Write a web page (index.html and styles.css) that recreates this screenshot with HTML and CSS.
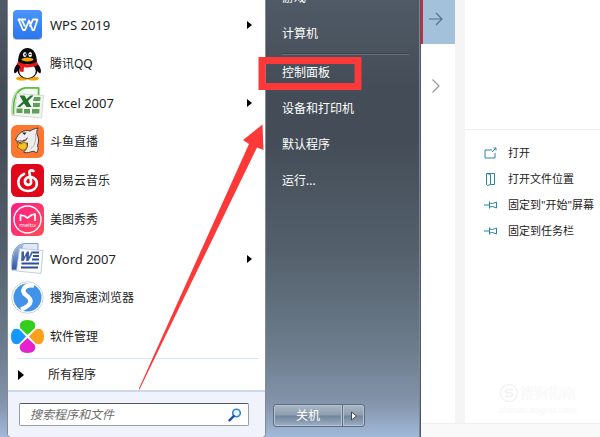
FILE: index.html
```html
<!DOCTYPE html>
<html lang="zh-CN">
<head>
<meta charset="utf-8">
<title>开始菜单</title>
<link rel="stylesheet" href="styles.css">
</head>
<body>
<main class="screen">
  <section class="start">
    <div class="programs">
      <ul class="apps">
        <li><a class="app latin" href="#">
          <svg class="icon" viewBox="0 0 34 34"><defs><linearGradient id="wps" x2="0" y2="1"><stop stop-color="#4b95fb"/><stop offset="1" stop-color="#2a76ee"/></linearGradient></defs><rect x="2" y="3" width="29" height="29" rx="4" fill="#b9bfc8"/><rect x="2" y="2" width="29" height="29" rx="4" fill="url(#wps)"/><path d="M15 11.500H7.500L12 22h2l4-9.500 3.500 9.500h1.500L26.500 11.500H22l-3.500 7M10.500 11.500l3.500 7" fill="none" stroke="#fff" stroke-width="1.800" stroke-linejoin="round"/></svg>
          <span>WPS 2019</span><i class="more"></i></a></li>
        <li><a class="app" href="#">
          <svg class="icon" viewBox="0 0 34 34"><ellipse cx="11" cy="31.500" rx="6" ry="2" fill="#f5a50a"/><ellipse cx="22" cy="31.500" rx="6" ry="2" fill="#f5a50a"/><path d="M7 16c-3 3-5 8-3.500 10 1 1 2-1 3-2 1 5 5 7.500 10 7.500s9-2.500 10-7.500c1 1 2 3 3 2 1.500-2-.5-7-3.500-10C26 6 22 1 16.500 1S7 6 7 16z" fill="#0a0a0c"/><ellipse cx="16.500" cy="24" rx="8.300" ry="7" fill="#fff"/><ellipse cx="13.800" cy="7.500" rx="1.800" ry="2.500" fill="#fff"/><ellipse cx="19.200" cy="7.500" rx="1.800" ry="2.500" fill="#fff"/><circle cx="14.200" cy="7.500" r=".9" fill="#111"/><path d="M18.300 8q1-2 2 0" fill="none" stroke="#111"/><ellipse cx="16.500" cy="12.500" rx="6" ry="1.900" fill="#f8a80d"/><path d="M7 14.500c5 3.500 14 3.500 19 0l1 3.500c-4 2-10 3-14 2.200l-.5 4.800-4-.5.500-5.500-3-1.500z" fill="#e9171c"/></svg>
          <span>腾讯QQ</span></a></li>
        <li><a class="app latin" href="#">
          <svg class="icon" viewBox="0 0 34 34"><path d="M1 29C0 14 2 3 14 1.500h14V29z" fill="#f3faef" stroke="#a9d397"/><path d="M2.500 28C2 12 5 4 14 2h13.500v8" fill="none" stroke="#56b83a" stroke-width="1.600"/><path d="M6 7.500l26.500 2L30.500 32 3 29.500z" fill="#f2f6f1" stroke="#c3ccc3" stroke-width=".7"/><path d="M23 11h6.500l-.3 4H22zM22 17h7l-.3 4H22zM21 23h7.500l-.3 4.500H21zM13 23h6v4.500h-6zM5.500 22.500h6V27h-6z" fill="#5f9f57"/><path d="M8.500 9.500h5l2 3.500 4-3.500h3L17 15l3.500 6h-5L13 17.500 9 21H6l6-5.500z" fill="#24702e"/></svg>
          <span>Excel 2007</span><i class="more"></i></a></li>
        <li><a class="app" href="#">
          <svg class="icon" viewBox="0 0 34 34"><rect width="33" height="33" rx="6" fill="#fc7730"/><path d="M4.500 15C7 8 13 4 19 6c2-1 4-2.500 8-3-1 2-1.500 4-1 6 2 4 2 8 .5 12 1 2 1 4-1 7-2-2-4-2-6-1-3 1-5 1-7 0 3-2 4-5 4-9-4 1-8 0-12-3z" fill="#eeecec" stroke="#473c3c" stroke-width="1"/><path d="M6 15c4 1 8 0 11-3-1 5-6 6-11 3z" fill="#743a31"/><path d="M8 15l1.500-1 1.500 1.500 1.500-2 2 1" fill="none" stroke="#fff" stroke-width=".8"/><path d="M11 7.500l4.500 0-2 2.500z" fill="#32242c"/><path d="M6 17l4 2c3-3 7-1 6 3s-6 4-8 1l-2-1 1.500-2z" fill="#f5c022" stroke="#795417" stroke-width=".8"/><path d="M24.500 9c1 7-1 12-5 15" fill="none" stroke="#b9b5b5"/></svg>
          <span>斗鱼直播</span></a></li>
        <li><a class="app" href="#">
          <svg class="icon" viewBox="0 0 34 34"><rect width="33" height="33" rx="6" fill="#df0719"/><path d="M22.500 7c-2-1.500-4.500-.5-4 2l1.500 8c1 5-5.500 5-6 1-.4-4 3-5 6-5 8.500 1 8 14-3 14C5.500 27 4.500 13.500 13 10" fill="none" stroke="#fff" stroke-width="2.700" stroke-linecap="round"/></svg>
          <span>网易云音乐</span></a></li>
        <li><a class="app" href="#">
          <svg class="icon" viewBox="0 0 34 34"><defs><linearGradient id="mt" x1="0" y1="0" x2="1" y2="1"><stop stop-color="#ff1c8b"/><stop offset="1" stop-color="#ff4c55"/></linearGradient></defs><rect width="33" height="33" rx="6" fill="url(#mt)"/><circle cx="16.500" cy="16.500" r="13.500" fill="none" stroke="#fff" stroke-width="1.400"/><path d="M9.500 18v-6l4 1 3 2 4-3 3.500-1v7" fill="none" stroke="#fff" stroke-width="1.700" stroke-linejoin="round"/><text class="badge-text" x="16.500" y="24" text-anchor="middle">meitu</text></svg>
          <span>美图秀秀</span></a></li>
        <li><a class="app latin" href="#">
          <svg class="icon" viewBox="0 0 34 34"><defs><linearGradient id="wd" y1="1" x2="0" y2="0"><stop stop-color="#2d559f"/><stop offset="1" stop-color="#a9c1ea"/></linearGradient></defs><path d="M1 28C0 12 3 3 13 1.500h14V28z" fill="#dde8f8" stroke="#7f9dd0"/><path d="M1 27.500C1 12 4 3 13 1.500l-2 6-3 20z" fill="url(#wd)"/><path d="M8.500 6.500l23.500 2L30 31.500 5.500 29z" fill="#fafbfe" stroke="#b5c0d4" stroke-width=".8"/><path d="M22 10.500h6M22 14h6M21 17.500h7M10.500 21.500H28M10 25.500h17" stroke="#2e4f94" stroke-width="2"/><path d="M10.500 9.500h2.500v5.500l3-5.500h2v5.500l2.500-5.500h2L17.500 19h-2.300v-5l-2.700 5h-2.300z" fill="#3c5da6"/></svg>
          <span>Word 2007</span><i class="more"></i></a></li>
        <li><a class="app" href="#">
          <svg class="icon" viewBox="0 0 34 34"><circle cx="16.500" cy="16.500" r="15.800" fill="#fff" stroke="#cfd1d5"/><circle cx="16.500" cy="16.500" r="14" fill="#4193ea"/><path d="M23 4.500C13 3 9.500 10 15 14s8 9-5 14.500" fill="none" stroke="#fff" stroke-width="4.500"/></svg>
          <span>搜狗高速浏览器</span></a></li>
        <li><a class="app" href="#">
          <svg class="icon" viewBox="0 0 34 34"><path d="M16.500 15L9.500 8.500C7 3 11 0 16.500 0S26 3 23.500 8.500z" fill="#34cf1d"/><path d="M18 16.500L24.500 9.500C30 7 33 11 33 16.500S30 26 24.500 23.500z" fill="#fba01c"/><path d="M16.500 18L23.500 24.500C26 30 22 33 16.500 33S7 30 9.500 24.500z" fill="#e622cf"/><path d="M15 16.500L8.500 23.500C3 26 0 22 0 16.500S3 7 8.500 9.500z" fill="#1598ff"/></svg>
          <span>软件管理</span></a></li>
      </ul>
      <a class="all" href="#"><i class="more"></i><span>所有程序</span></a>
      <form class="search">
        <label class="field">
          <input type="text" aria-label="搜索程序和文件" placeholder="搜索程序和文件">
          <svg class="lens" viewBox="0 0 14 14"><circle cx="8.500" cy="5" r="3.800" fill="#e5f5ff" stroke="#2b86d0" stroke-width="1.600"/><path d="M5.800 8L1.500 12.300" stroke="#1c4ea4" stroke-width="2.400" stroke-linecap="round"/></svg>
        </label>
      </form>
    </div>
    <div class="system">
      <nav class="links">
        <a href="#">游戏</a>
        <a href="#">计算机</a>
        <hr>
        <a href="#">控制面板</a>
        <a href="#">设备和打印机</a>
        <a href="#">默认程序</a>
        <a href="#">运行...</a>
      </nav>
      <div class="power">
        <button class="off" type="button">关机</button>
        <button class="options" type="button" aria-label="更多选项"><svg viewBox="0 0 8 10"><path d="M1.500 1v8L6.500 5z" fill="#fff" stroke="#3c4651"/></svg></button>
      </div>
    </div>
    <svg class="marks" viewBox="0 0 421 437"><rect x="262" y="60.500" width="96" height="26" fill="none" stroke="#fd3838" stroke-width="7"/><path d="M262.500 124.500L263.500 150 257 147.500 139.500 389.500l-.8-.5L249 144l-6-4z" fill="#fd3838"/></svg>
  </section>
  <section class="results">
    <div class="arrows">
      <a class="go" href="#" aria-label="打开"><svg viewBox="0 0 14 14"><path d="M0 7h13M7 1l6 6-6 6" fill="none" stroke="#53738e" stroke-width="1.200"/></svg></a>
      <a class="next" href="#" aria-label="展开"><svg viewBox="0 0 14 14"><path d="M3.500.5L10 7l-6.500 6.500" fill="none" stroke="#999" stroke-width="1.200"/></svg></a>
    </div>
    <div class="detail">
      <ul class="actions">
        <li><a href="#"><svg viewBox="0 0 14 14"><path d="M8 4H1v8h10V7M8 6l4-4M9.500 2H12v2.500" fill="none" stroke="#2586ae"/></svg>打开</a></li>
        <li><a href="#"><svg viewBox="0 0 14 14"><path d="M2.500 1.500l4 1v10l-3 1-1-1zM3 1.500h7.500v11h-4" fill="none" stroke="#2586ae"/></svg>打开文件位置</a></li>
        <li><a href="#"><svg viewBox="0 0 14 14"><path d="M0 7h5M5.500 3.500v7M5.500 5l3 .5 4-1.500v6l-4-1.500-3 .5" fill="none" stroke="#2586ae"/></svg>固定到"开始"屏幕</a></li>
        <li><a href="#"><svg viewBox="0 0 14 14"><path d="M0 7h5M5.500 3.500v7M5.500 5l3 .5 4-1.500v6l-4-1.500-3 .5" fill="none" stroke="#2586ae"/></svg>固定到任务栏</a></li>
      </ul>
      <div class="brand">
        <svg viewBox="0 0 20 20"><circle cx="10" cy="10" r="8.500" fill="none" stroke="#f3f3f3" stroke-width="1.500"/><path d="M14 6.500H8.500q-2 0-2 1.700t2 1.700h3q2 0 2 1.800t-2 1.800H6" fill="none" stroke="#f3f3f3" stroke-width="2"/></svg>
        <b>搜狗指南</b>
        <small>zhinan.sogou.com</small>
      </div>
    </div>
    <div class="footer"></div>
  </section>
</main>
</body>
</html>
```
FILE: styles.css
```css
* { box-sizing: border-box; }

body {
  margin: 0;
  background: #fff;
  color: #222;
  font: 12px/18px "Noto Sans", "Noto Sans CJK SC", sans-serif;
}

a { color: inherit; text-decoration: none; }
ul { margin: 0; padding: 0; list-style: none; }
svg { display: block; flex: none; }

.screen {
  display: grid;
  grid-template-columns: 421px 1fr;
  min-height: 100vh;
  overflow: hidden;
}

/* Start menu */
.start {
  position: relative;
  display: grid;
  grid-template-columns: 259px 1fr;
  padding-left: 7px;
  border-right: 1px solid #4e5965;
  background: linear-gradient(#505a66, #444d57 20%, #444d57 32%, #53606c 57%, #6d7d8d 80%, #8495ac 92%, #a3bbdc);
  box-shadow: inset -1px 0 #7d8791;
}

.programs {
  display: flex;
  flex-direction: column;
  margin-bottom: 1px;
  border: 1px solid #838c96;
  border-top: 0;
  border-radius: 0 0 5px 5px;
  background: #fff;
  overflow: hidden;
}

.apps {
  margin: 0 7px 0 3px;
  padding: 5px 0 2px;
}

.app {
  display: flex;
  align-items: center;
  gap: 5px;
  height: 39px;
  padding-right: 6px;
}

.latin { font-size: 13px; }

.icon { width: 34px; height: 34px; }

.more {
  margin-left: auto;
  border: 4px solid transparent;
  border-left: 5px solid #000;
  border-right: 0;
}

.badge-text {
  fill: #fff;
  font: 6px "Noto Sans", sans-serif;
}

.all {
  display: flex;
  align-items: center;
  gap: 24px;
  height: 32px;
  margin: 0 7px 0 10px;
  border-top: 1px solid #d6e5f5;
}

.all .more { margin: 0; border-width: 5px 0 5px 6px; }

.search {
  flex: 1;
  padding: 11px 16px 11px 11px;
  border-top: 2px solid #ccd9eb;
  background: #f0f3fb;
}

.field {
  display: flex;
  align-items: center;
  height: 23px;
  padding: 0 6px 0 10px;
  border: 1px solid #999fa7;
  border-top-color: #555;
  border-radius: 2px;
  background: #fff;
}

.field input {
  flex: 1;
  min-width: 0;
  padding: 0;
  border: 0;
  outline: 0;
  background: none;
  font: inherit;
  font-style: italic;
}

.field input::placeholder { color: #6b6b6b; }
.lens { width: 14px; height: 14px; }

.system {
  display: flex;
  flex-direction: column;
  justify-content: space-between;
  padding: 0 11px 12px 7px;
  color: #fff;
}

.links {
  display: flex;
  flex-direction: column;
  margin-top: -20px;
  padding-left: 9px;
}

.links a { height: 36px; line-height: 36px; }

.links hr {
  width: 100%;
  margin: 1px 0 0;
  border: 0;
  border-top: 1px solid #3b444d;
  border-bottom: 1px solid #66707b;
}

.power { display: flex; }

.power button {
  display: grid;
  place-items: center;
  height: 23px;
  padding: 0;
  border: 1px solid #5e6d7e;
  background: linear-gradient(#a9b6c5, #8f9eaf 48%, #73859a 52%, #9bafc7);
  box-shadow: inset 0 0 0 1px #b6c3d2;
  color: #fff;
  font: inherit;
}

.power .off { width: 70px; border-radius: 3px 0 0 3px; }
.power .options { width: 23px; margin-left: -1px; border-radius: 0 3px 3px 0; }
.options svg { width: 8px; height: 10px; }

.marks {
  position: absolute;
  top: 0;
  left: 0;
  width: 421px;
  height: 437px;
  pointer-events: none;
}

/* Search results */
.results {
  display: grid;
  grid-template-columns: 44px 1fr;
  grid-template-rows: 1fr 16px;
}

.arrows { border-right: 10px solid #f5f5f5; }
.arrows a { display: grid; place-items: center; }
.arrows svg { width: 14px; height: 14px; }

.go {
  height: 44px;
  padding: 0 6px 6px 0;
  border-left: 2px solid #d9243a;
  background: #a3c1da;
}

.next { height: 84px; padding-right: 4px; }

.detail {
  display: flex;
  flex-direction: column;
  justify-content: space-between;
  padding: 129px 0 6px;
}

.actions {
  padding: 10px 0 0 19px;
  border-top: 1px solid #eee;
  font-size: 11px;
}

.actions a {
  display: flex;
  align-items: center;
  gap: 10px;
  height: 26px;
  white-space: nowrap;
}

.actions svg { width: 14px; height: 14px; }

.brand {
  display: grid;
  grid-template-columns: 20px auto;
  justify-content: start;
  column-gap: 1px;
  padding-left: 34px;
  color: #fdfdfd;
  font-size: 14px;
  text-shadow: 0 0 1px #ebebeb;
}

.brand svg { width: 20px; height: 20px; }
.brand b { font-weight: 400; line-height: 20px; }
.brand small { grid-column: 1 / 3; font-size: 9px; line-height: 14px; }

.footer {
  grid-column: 1 / 3;
  border-top: 1px solid #f0f0f0;
  background: #f9f9f9;
}
```
